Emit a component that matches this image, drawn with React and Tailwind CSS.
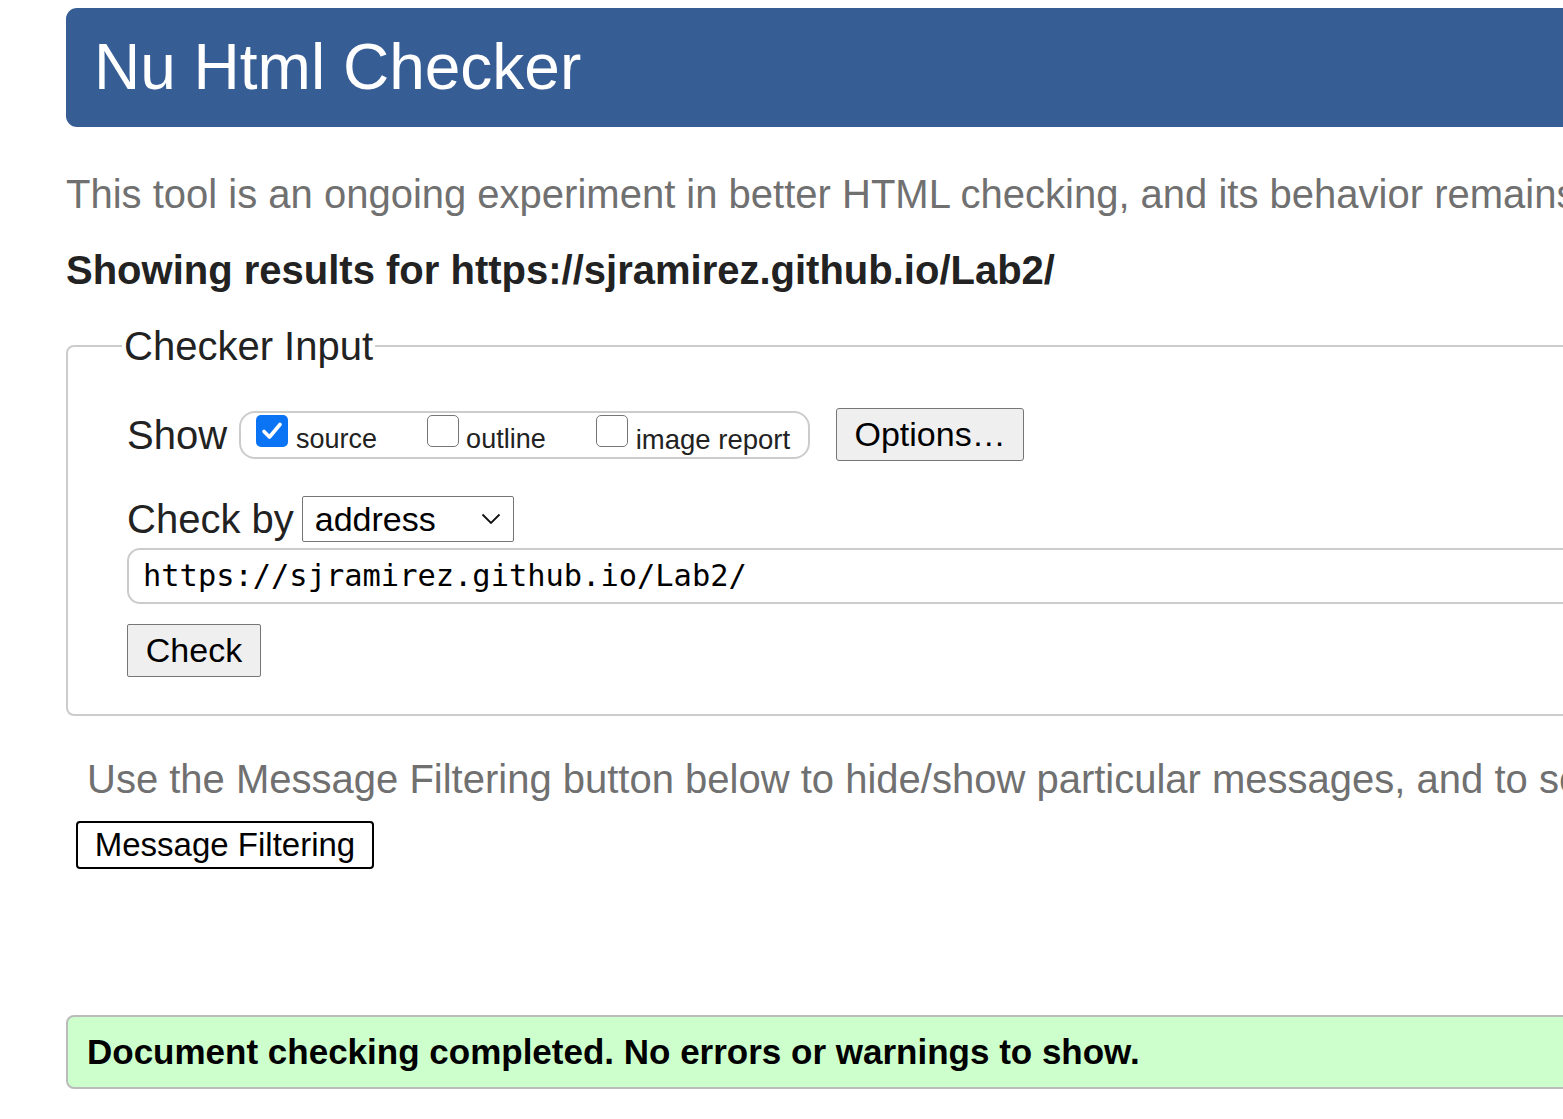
import React from "react";

function Box({ checked }) {
  if (checked) {
    return (
      <span className="inline-flex items-center justify-center w-[32px] h-[32px] mb-[8px] rounded-[5px] bg-[#0b74f4] shrink-0">
        <svg width="24" height="24" viewBox="0 0 24 24" fill="none">
          <path d="M4 12.5 L9.5 18 L20 5.5" stroke="white" strokeWidth="3.6" strokeLinecap="round" strokeLinejoin="round" />
        </svg>
      </span>
    );
  }
  return <span className="inline-block w-[32px] h-[32px] mb-[8px] rounded-[5px] border border-[#767676] bg-white shrink-0" />;
}

export default function App() {
  return (
    <div className="w-[1563px] h-[1119px] overflow-hidden bg-white" style={{ fontFamily: '"Liberation Sans", Arial, sans-serif' }}>
      <div className="w-[2200px] pl-[66px] pt-[8px]">
        <header className="h-[119px] bg-[#375d95] rounded-l-[11px] flex items-center pl-[28px]">
          <h1 className="text-white text-[64px] leading-none pb-[2px]">Nu Html Checker</h1>
        </header>

        <p className="mt-[44px] text-[40px] leading-[46px] text-[#707070] whitespace-nowrap">
          This tool is an ongoing experiment in better HTML checking, and its behavior remains subject to change
        </p>

        <h2 className="mt-[30px] text-[40px] leading-[46px] font-bold text-[#222] whitespace-nowrap">
          Showing results for https://sjramirez.github.io/Lab2/
        </h2>

        <fieldset className="mt-[30px] border-2 border-[#cccccc] rounded-[8px] pl-[59px] h-[393px] min-w-0">
          <legend className="ml-[-5px] px-[2px] text-[40px] leading-[46px] text-[#222]">Checker Input</legend>

          <div className="mt-[39px] flex items-center">
            <span className="text-[40px] leading-[46px] text-[#222] mr-[12px]">Show</span>
            <div className="h-[48px] w-[571px] border-2 border-[#cccccc] rounded-[16px] flex items-center pl-[15px]">
              <label className="flex items-center">
                <Box checked />
                <span className="ml-[8px] text-[27px] text-[#222] pt-[10px]">source</span>
              </label>
              <label className="flex items-center ml-[50px]">
                <Box />
                <span className="ml-[7px] text-[27px] text-[#222] pt-[10px]">outline</span>
              </label>
              <label className="flex items-center ml-[50px]">
                <Box />
                <span className="ml-[8px] text-[27.5px] text-[#222] pt-[10px]">image report</span>
              </label>
            </div>
            <button className="ml-[26px] w-[188px] h-[53px] bg-[#efefef] border border-[#767676] rounded-[3px] text-[34px] text-black flex items-center justify-center">
              Options…
            </button>
          </div>

          <div className="mt-[35px] flex items-center">
            <span className="text-[40px] leading-[46px] text-[#222] mr-[8px]">Check by</span>
            <div className="w-[212px] h-[46px] border border-[#767676] rounded-[2px] flex items-center justify-between pl-[12px] pr-[12px]">
              <span className="text-[34px] text-black">address</span>
              <svg width="20" height="12" viewBox="0 0 20 12" fill="none">
                <path d="M1.5 1.5 L10 10 L18.5 1.5" stroke="#111" strokeWidth="1.8" />
              </svg>
            </div>
          </div>

          <div className="mt-[6px] h-[56px] border-2 border-[#cccccc] rounded-[13px] flex items-center pl-[14px]">
            <span className="text-[30.4px] text-black" style={{ fontFamily: '"DejaVu Sans Mono", monospace' }}>
              https://sjramirez.github.io/Lab2/
            </span>
          </div>

          <button className="mt-[20px] w-[134px] h-[53px] bg-[#efefef] border border-[#767676] rounded-[2px] text-[34px] text-black flex items-center justify-center">
            Check
          </button>
        </fieldset>

        <p className="mt-[40px] ml-[21px] text-[40px] leading-[46px] text-[#707070] whitespace-nowrap">
          Use the Message Filtering button below to hide/show particular messages, and to see total counts of errors and warnings.
        </p>

        <button className="mt-[19px] ml-[10px] w-[298px] h-[48px] bg-white border-2 border-black rounded-[4px] text-[33px] text-black flex items-center justify-center">
          Message Filtering
        </button>

        <div className="mt-[146px] h-[74px] bg-[#ccffcc] border-2 border-[#bbbbbb] rounded-l-[8px] flex items-center pl-[19px]">
          <span className="text-[35px] font-bold text-black whitespace-nowrap">Document checking completed. No errors or warnings to show.</span>
        </div>
      </div>
    </div>
  );
}
